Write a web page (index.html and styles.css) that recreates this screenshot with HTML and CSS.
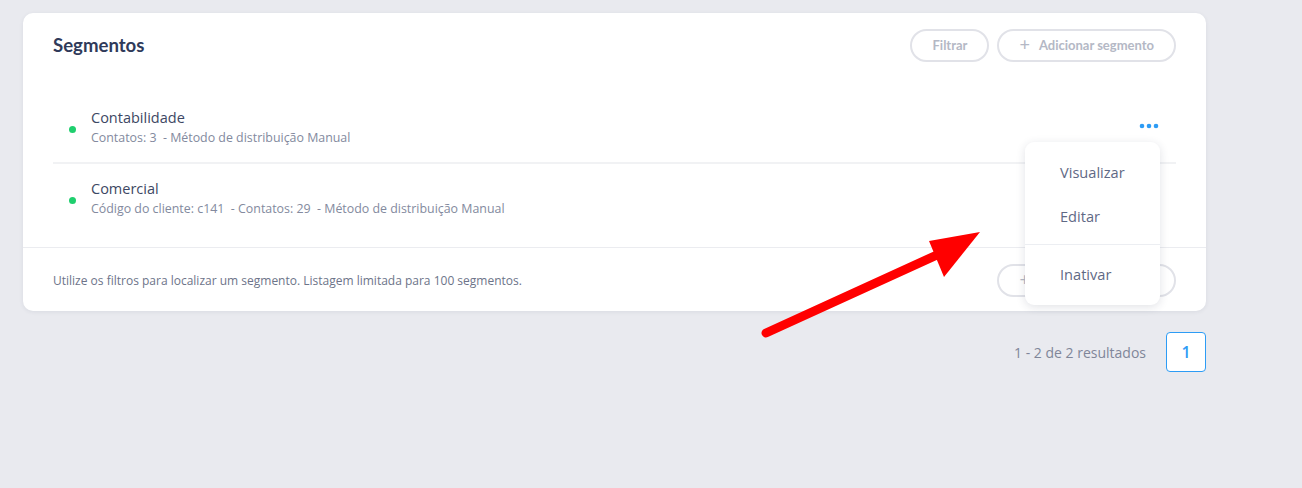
FILE: index.html
```html
<!DOCTYPE html>
<html lang="pt">
<head>
<meta charset="utf-8">
<link rel="stylesheet" href="styles.css">
</head>
<body>
<div class="page">
  <section class="card">
    <header class="card-head">
      <h1 class="title">Segmentos</h1>
      <div class="actions">
        <button class="pill">Filtrar</button>
        <button class="pill"><span class="plus">+</span>Adicionar segmento</button>
      </div>
    </header>
    <ul class="list">
      <li class="row first">
        <span class="dot"></span>
        <div class="info">
          <div class="name">Contabilidade</div>
          <div class="meta">Contatos: 3 &nbsp;- Método de distribuição Manual</div>
        </div>
        <div class="more">
          <svg width="20" height="6" viewBox="0 0 20 6"><circle cx="3" cy="3" r="2.3" fill="#2d9cf5"/><circle cx="10" cy="3" r="2.3" fill="#2d9cf5"/><circle cx="17" cy="3" r="2.3" fill="#2d9cf5"/></svg>
          <div class="menu">
            <div class="menu-item">Visualizar</div>
            <div class="menu-item">Editar</div>
            <div class="menu-sep"></div>
            <div class="menu-item">Inativar</div>
          </div>
        </div>
      </li>
      <li class="row second">
        <span class="dot"></span>
        <div class="info">
          <div class="name">Comercial</div>
          <div class="meta">Código do cliente: c141 &nbsp;- Contatos: 29 &nbsp;- Método de distribuição Manual</div>
        </div>
      </li>
    </ul>
    <footer class="card-foot">
      <p class="hint">Utilize os filtros para localizar um segmento. Listagem limitada para 100 segmentos.</p>
      <button class="pill"><span class="plus">+</span>Adicionar segmento</button>
    </footer>
  </section>
  <nav class="pager">
    <span class="count">1 - 2 de 2 resultados</span>
    <button class="page-btn">1</button>
  </nav>
  <svg class="arrow" width="240" height="120" viewBox="0 0 240 120">
    <line x1="8" y1="104" x2="192" y2="20" stroke="#ff0000" stroke-width="9" stroke-linecap="round"/>
    <polygon points="222,3 171,12 186,48" fill="#ff0000"/>
  </svg>
</div>
</body>
</html>
```

FILE: styles.css
```css
* { box-sizing: border-box; }
html, body { margin: 0; padding: 0; }
body {
  background: #e9eaef;
  font-family: "Open Sans", "Noto Sans", sans-serif;
  width: 1302px;
  height: 488px;
  overflow: hidden;
}
.page {
  position: relative;
  padding: 13px 0 0 23px;
  width: 1206px;
}
.card {
  width: 1183px;
  background: #fff;
  border-radius: 10px;
  box-shadow: 0 1px 4px rgba(40, 50, 80, 0.08);
}
.card-head {
  display: flex;
  align-items: center;
  justify-content: space-between;
  padding: 0 30px;
  height: 64px;
}
.title {
  margin: 0;
  font-family: "Lato", sans-serif;
  font-weight: 700;
  font-size: 18.6px;
  color: #2f3a5a;
}
.actions { display: flex; gap: 8px; }
.pill {
  height: 33px;
  padding: 0 20px;
  border: 2px solid #e1e2e8;
  background: #fff;
  border-radius: 17px;
  font-family: "Lato", sans-serif;
  font-weight: 700;
  font-size: 13px;
  color: #b4b8c5;
  display: inline-flex;
  align-items: center;
}
.plus {
  font-size: 18px;
  font-weight: 400;
  margin-right: 9px;
  line-height: 1;
  position: relative;
  top: -1px;
}
.list {
  list-style: none;
  margin: 0;
  padding: 15px 30px 0 30px;
}
.row {
  display: flex;
  align-items: flex-start;
  position: relative;
}
.row.first {
  height: 72px;
  padding-top: 16px;
  border-bottom: 2px solid #f1f2f4;
}
.row.second {
  height: 83px;
  padding-top: 15px;
}
.dot {
  width: 7px;
  height: 7px;
  border-radius: 50%;
  background: #1fcf6e;
  margin: 18px 0 0 16px;
  flex: none;
}
.info { margin-left: 15px; flex: 1; }
.name {
  font-size: 14.5px;
  color: #3d4763;
  line-height: 20px;
}
.meta {
  font-size: 12.4px;
  color: #838a9e;
  line-height: 18px;
  margin-top: 1px;
}
.more {
  position: relative;
  margin-right: 17px;
  margin-top: 15px;
  height: 6px;
  display: flex;
}
.menu {
  position: absolute;
  top: 19px;
  right: -1px;
  width: 135px;
  background: #fff;
  border-radius: 9px;
  box-shadow: 0 2px 10px rgba(40, 50, 80, 0.14);
  padding: 8px 0 9px;
  z-index: 5;
}
.menu-item {
  font-size: 14.6px;
  color: #5f6985;
  padding: 0 0 0 35px;
  height: 44px;
  line-height: 44px;
}
.menu-sep {
  height: 1px;
  background: #eceef2;
  margin: 6px 0 7px 0;
}
.card-foot {
  display: flex;
  align-items: center;
  justify-content: space-between;
  border-top: 1px solid #ebecf0;
  padding: 1px 30px 0;
  height: 64px;
}
.hint {
  margin: 0;
  font-size: 12px;
  color: #6d7489;
}
.pager {
  display: flex;
  justify-content: flex-end;
  align-items: center;
  gap: 20px;
  margin-top: 21px;
  width: 1183px;
}
.count {
  font-size: 14px;
  color: #808699;
}
.page-btn {
  width: 40px;
  height: 40px;
  border: 1px solid #2d9cf5;
  border-radius: 4px;
  background: #fff;
  color: #2d9cf5;
  font-family: "Open Sans", sans-serif;
  font-size: 16px;
  font-weight: 600;
}
.arrow {
  position: absolute;
  left: 758px;
  top: 229px;
  z-index: 10;
}
```
